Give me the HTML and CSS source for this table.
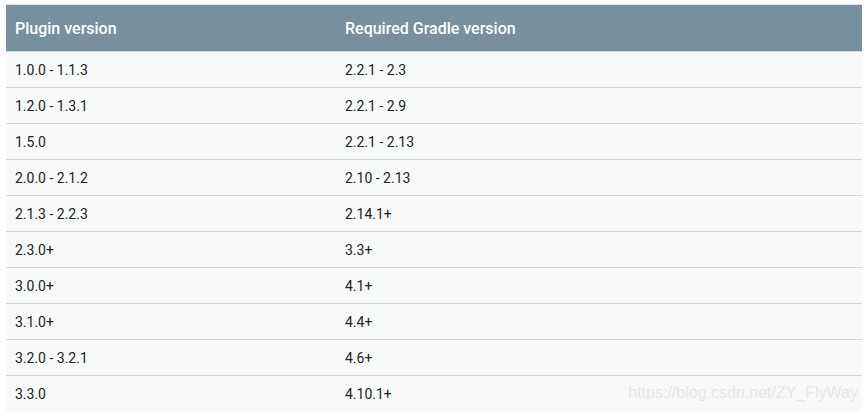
FILE: index.html
```html
<!DOCTYPE html>
<html>
<head>
<meta charset="utf-8">
<link rel="stylesheet" href="styles.css">
</head>
<body>
<div class="wrap">
<table class="versions">
<thead>
<tr><th class="c1">Plugin version</th><th>Required Gradle version</th></tr>
</thead>
<tbody>
<tr><td>1.0.0 - 1.1.3</td><td>2.2.1 - 2.3</td></tr>
<tr><td>1.2.0 - 1.3.1</td><td>2.2.1 - 2.9</td></tr>
<tr><td>1.5.0</td><td>2.2.1 - 2.13</td></tr>
<tr><td>2.0.0 - 2.1.2</td><td>2.10 - 2.13</td></tr>
<tr><td>2.1.3 - 2.2.3</td><td>2.14.1+</td></tr>
<tr><td>2.3.0+</td><td>3.3+</td></tr>
<tr><td>3.0.0+</td><td>4.1+</td></tr>
<tr><td>3.1.0+</td><td>4.4+</td></tr>
<tr><td>3.2.0 - 3.2.1</td><td>4.6+</td></tr>
<tr><td>3.3.0</td><td>4.10.1+</td></tr>
</tbody>
</table>
<div class="watermark">https://blog.csdn.net/ZY_FlyWay</div>
</div>
</body>
</html>
```
FILE: styles.css
```css
html, body {
  margin: 0;
  padding: 0;
  background: #ffffff;
}
.wrap {
  position: relative;
  padding: 4px 5px 0 6px;
}
.versions {
  width: 856px;
  border-collapse: collapse;
  font-family: Roboto, "Liberation Sans", sans-serif;
  border-top: 1px solid #dfe3e5;
}
.versions th {
  background: #78909c;
  color: #ffffff;
  font-weight: 500;
  font-size: 16px;
  text-align: left;
  height: 47px;
  padding: 0 0 0 9px;
  box-sizing: border-box;
  border-bottom: 1px solid #cfd8dc;
}
.versions th.c1 {
  width: 330px;
}
.versions td {
  background: #f8f9f9;
  color: #212121;
  font-size: 14px;
  height: 36px;
  padding: 0 0 0 9px;
  box-sizing: border-box;
  border-bottom: 1px solid #cfd8dc;
  vertical-align: middle;
}
.versions tbody tr:last-child td {
  border-bottom: none;
}
.watermark {
  position: absolute;
  right: 9px;
  top: 384px;
  font-family: "Liberation Sans", Arial, sans-serif;
  font-size: 16px;
  color: #e6e8ea;
}
```
